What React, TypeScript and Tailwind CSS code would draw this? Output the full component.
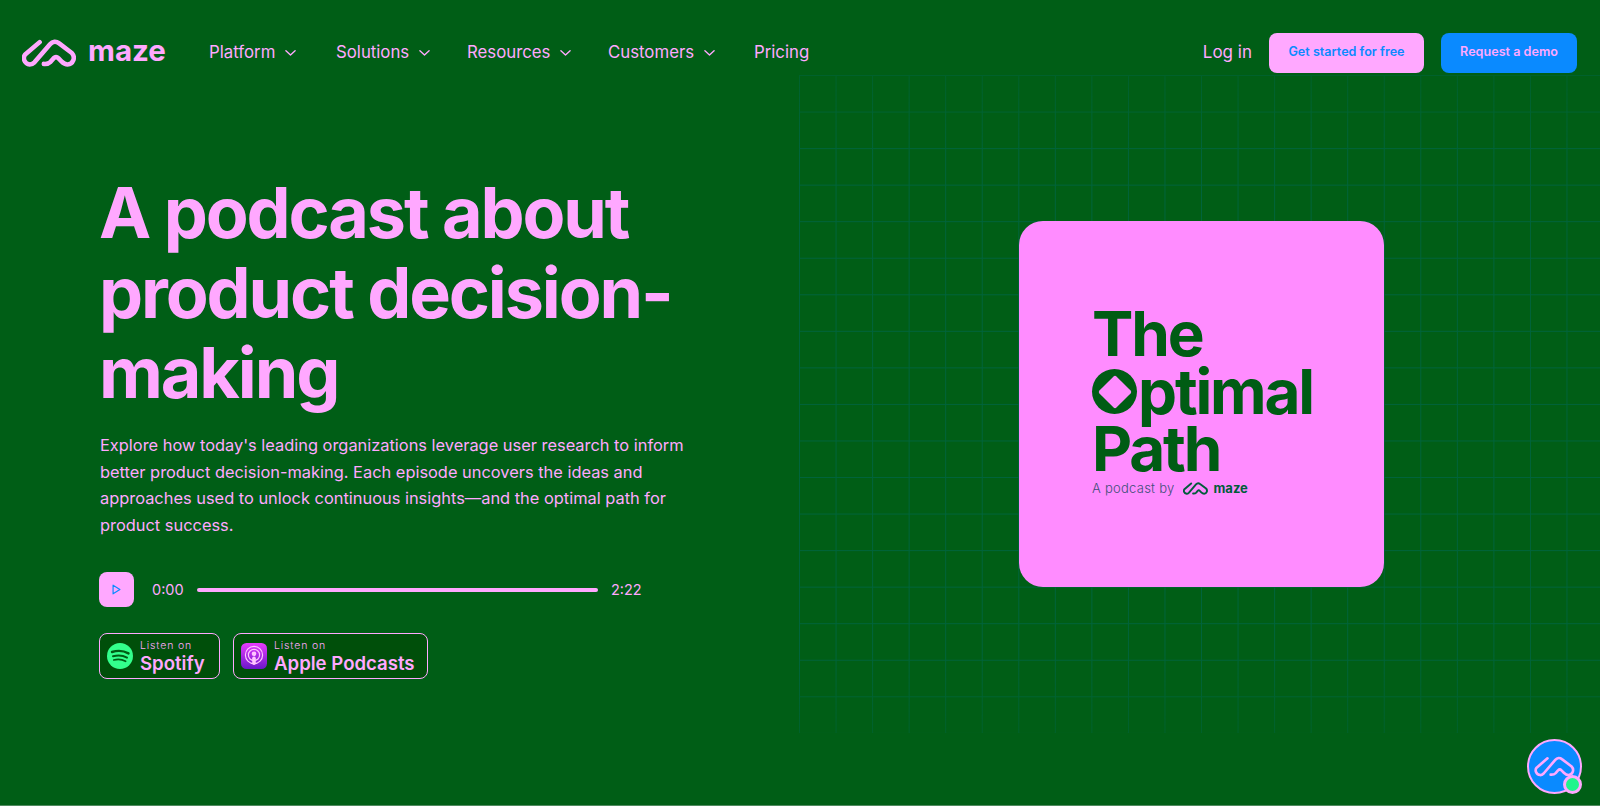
import React from "react";

const PINK = "#ffa8ff";

function MazeMark({ className, color, sw = 4 }: { className?: string; color: string; sw?: number }) {
  return (
    <svg viewBox="0 0 52 27" className={className} fill="none">
      <path
        d="M17 3 L3 15 C0.5 18 2 24 7.5 24.5 C9.5 24.5 11 23.5 12 22.5 L27 5 C29.5 2 33 2 35.5 4 L48 13.5 C52 18 49 24.5 44 24.5 C41 24.5 39.5 23 38 21.5 L35 18.5 C33.5 17 32 17 30.5 18.5 L27.5 22 C25 24.5 23 24 21 24"
        stroke={color}
        strokeWidth={sw}
        strokeLinecap="round"
        strokeLinejoin="round"
      />
    </svg>
  );
}

function Chevron() {
  return (
    <svg viewBox="0 0 12 8" className="w-[11px] h-[8px]" fill="none">
      <path d="M1 1.5 L6 6.2 L11 1.5" stroke={PINK} strokeWidth="1.5" strokeLinecap="round" strokeLinejoin="round" />
    </svg>
  );
}

function NavItem({ label, className }: { label: string; className: string }) {
  return (
    <a className={`flex items-center gap-[10px] text-[16.8px] font-normal text-[#ffa8ff] ${className}`}>
      {label}
      <Chevron />
    </a>
  );
}

function SpotifyIcon() {
  return (
    <svg viewBox="0 0 26 26" className="w-[26px] h-[26px] shrink-0">
      <circle cx="13" cy="13" r="13" fill="#33ff8c" />
      <path d="M5 9 C10.5 7.3 16.5 7.6 21.5 10.4" stroke="#005c14" strokeWidth="2.4" strokeLinecap="round" fill="none" />
      <path d="M6 13.2 C10.5 12 16 12.3 20 14.6" stroke="#005c14" strokeWidth="2" strokeLinecap="round" fill="none" />
      <path d="M6.8 17 C10.5 16.1 15 16.3 18.6 18.3" stroke="#005c14" strokeWidth="1.7" strokeLinecap="round" fill="none" />
    </svg>
  );
}

function PodcastIcon() {
  return (
    <svg viewBox="0 0 26 26" className="w-[26px] h-[26px] shrink-0">
      <defs>
        <linearGradient id="apg" x1="0" y1="0" x2="0" y2="1">
          <stop offset="0" stopColor="#e83cff" />
          <stop offset="1" stopColor="#6a17c9" />
        </linearGradient>
      </defs>
      <rect width="26" height="26" rx="5.5" fill="url(#apg)" />
      <circle cx="13" cy="12" r="8.6" fill="none" stroke="#ffc4ff" strokeWidth="1.2" />
      <circle cx="13" cy="12" r="5.6" fill="none" stroke="#ffc4ff" strokeWidth="1.2" />
      <circle cx="13" cy="10.8" r="2.3" fill="#ffc4ff" />
      <rect x="11.2" y="13.6" width="3.6" height="8.4" rx="1.7" fill="#ffc4ff" />
    </svg>
  );
}

function Badge({ icon, label, width }: { icon: React.ReactNode; label: string; width: string }) {
  return (
    <a className={`flex items-center h-[46px] pl-[7px] gap-[7px] rounded-[8px] border border-[#ffa8ff] bg-[#004f0a] ${width}`}>
      {icon}
      <span className="flex flex-col">
        <span className="text-[10.5px] leading-[13px] mt-[1px] tracking-[0.08em] font-light text-[#ffa8ff]">Listen on</span>
        <span className="text-[18.6px] leading-[22px] font-semibold text-[#ffa8ff]">{label}</span>
      </span>
    </a>
  );
}

export default function App() {
  return (
    <div
      className="relative w-full h-[806px] overflow-hidden bg-[#005e16] border-b border-[#4f8a5f] text-[#ffa8ff]"
      style={{ fontFamily: "Inter, 'Noto Sans', sans-serif" }}
    >
      {/* decorative grid behind the cover */}
      <div className="absolute left-[799px] top-[75px] right-0 h-[658px] bg-[linear-gradient(to_right,#00643c_1px,transparent_1px),linear-gradient(to_bottom,#00643c_1px,transparent_1px)] bg-[size:36.55px_36.55px] [mask-image:linear-gradient(to_bottom,rgba(0,0,0,0.6)_0%,#000_12%,#000_88%,rgba(0,0,0,0.6)_100%)]" />

      <div className="relative flex flex-col h-full">
        <header className="flex items-center h-[105px] pl-[22px] pr-[23px]">
          <a className="flex items-center gap-[12px] w-[187px]">
            <MazeMark className="w-[54px] h-[28px]" color={PINK} sw={4.4} />
            <span className="text-[29.5px] font-bold leading-none -mt-[3px]">maze</span>
          </a>
          <nav className="flex items-center mt-[1px]">
            <NavItem label="Platform" className="w-[127px]" />
            <NavItem label="Solutions" className="w-[131px]" />
            <NavItem label="Resources" className="w-[141px]" />
            <NavItem label="Customers" className="w-[146px]" />
            <a className="text-[16.8px] font-normal">Pricing</a>
          </nav>
          <div className="ml-auto flex items-center">
            <a className="text-[17px] font-normal mr-[17px]">Log in</a>
            <a className="flex items-center justify-center w-[155px] h-[40px] rounded-[8px] bg-[#ffa8ff] text-[#0a8aff] text-[12.6px] font-semibold mr-[17px]">
              Get started for free
            </a>
            <a className="flex items-center justify-center w-[136px] h-[40px] rounded-[8px] bg-[#0a8aff] text-[#ffa8ff] text-[12.6px] font-semibold">
              Request a demo
            </a>
          </div>
        </header>

        <main className="flex flex-1">
          <section className="w-[1019px] pl-[99px] pt-[68px]">
            <h1 className="text-[70px] leading-[80px] font-bold tracking-[-0.03em] w-[600px]">
              A podcast about product decision-making
            </h1>
            <p className="mt-[19px] ml-[1px] w-[600px] text-[16.4px] leading-[26.5px] font-normal">
              Explore how today's leading organizations leverage user research to inform better product decision-making. Each episode uncovers the ideas and approaches used to unlock continuous insights—and the optimal path for product success.
            </p>
            <div className="flex items-center mt-[34px]">
              <button className="flex items-center justify-center w-[35px] h-[35px] rounded-[8px] bg-[#ffa8ff]">
                <svg viewBox="0 0 10 12" className="w-[9px] h-[11px]" fill="none">
                  <path d="M1.2 1.2 L8.8 6 L1.2 10.8 Z" stroke="#0a8aff" strokeWidth="1.3" strokeLinejoin="round" />
                </svg>
              </button>
              <span className="ml-[18px] text-[14.5px] font-normal w-[45px]">0:00</span>
              <span className="w-[401px] h-[4px] rounded-full bg-[#ffa8ff]" />
              <span className="ml-[13px] text-[14.5px] font-normal">2:22</span>
            </div>
            <div className="flex mt-[26px] gap-[13px]">
              <Badge icon={<SpotifyIcon />} label="Spotify" width="w-[121px]" />
              <Badge icon={<PodcastIcon />} label="Apple Podcasts" width="w-[195px]" />
            </div>
          </section>

          <section className="pt-[116px]">
            <div className="w-[365px] h-[366px] rounded-[24px] bg-[#ff8cff] pl-[73px] pt-[84px] text-[#005c14]">
              <div className="text-[62px] leading-[57.5px] font-bold tracking-[-0.035em]">
                <div>The</div>
                <div className="flex items-end">
                  <span aria-hidden="true" className="relative flex items-center justify-center w-[45px] h-[45px] mb-[6px] mr-[1px] rounded-full bg-[#005c14]">
                    <span className="w-[24px] h-[24px] rotate-45 rounded-[2px] bg-[#ff8cff]" />
                  </span>
                  <span>ptimal</span>
                </div>
                <div>Path</div>
              </div>
              <div className="flex items-center mt-[1px] text-[13px] font-light text-[#3f4f7a]">
                <span className="tracking-[0.02em]">A podcast by</span>
                <MazeMark className="w-[25px] h-[13px] ml-[9px]" color="#005c3a" sw={4} />
                <span className="ml-[5px] text-[13px] font-bold text-[#005c3a]">maze</span>
              </div>
            </div>
          </section>
        </main>
      </div>

      {/* floating chat bubble */}
      <div className="absolute left-[1527px] top-[739px] w-[55px] h-[55px] rounded-full bg-[#0a8aff] border-[2.5px] border-[#ffa8ff] flex items-center justify-center">
        <MazeMark className="w-[41px] h-[21px]" color={PINK} sw={3.4} />
        <span className="absolute left-[34px] top-[34px] w-[19px] h-[19px] rounded-full bg-[#1ff58c] border-[3px] border-[#ffa8ff]" />
      </div>
    </div>
  );
}
